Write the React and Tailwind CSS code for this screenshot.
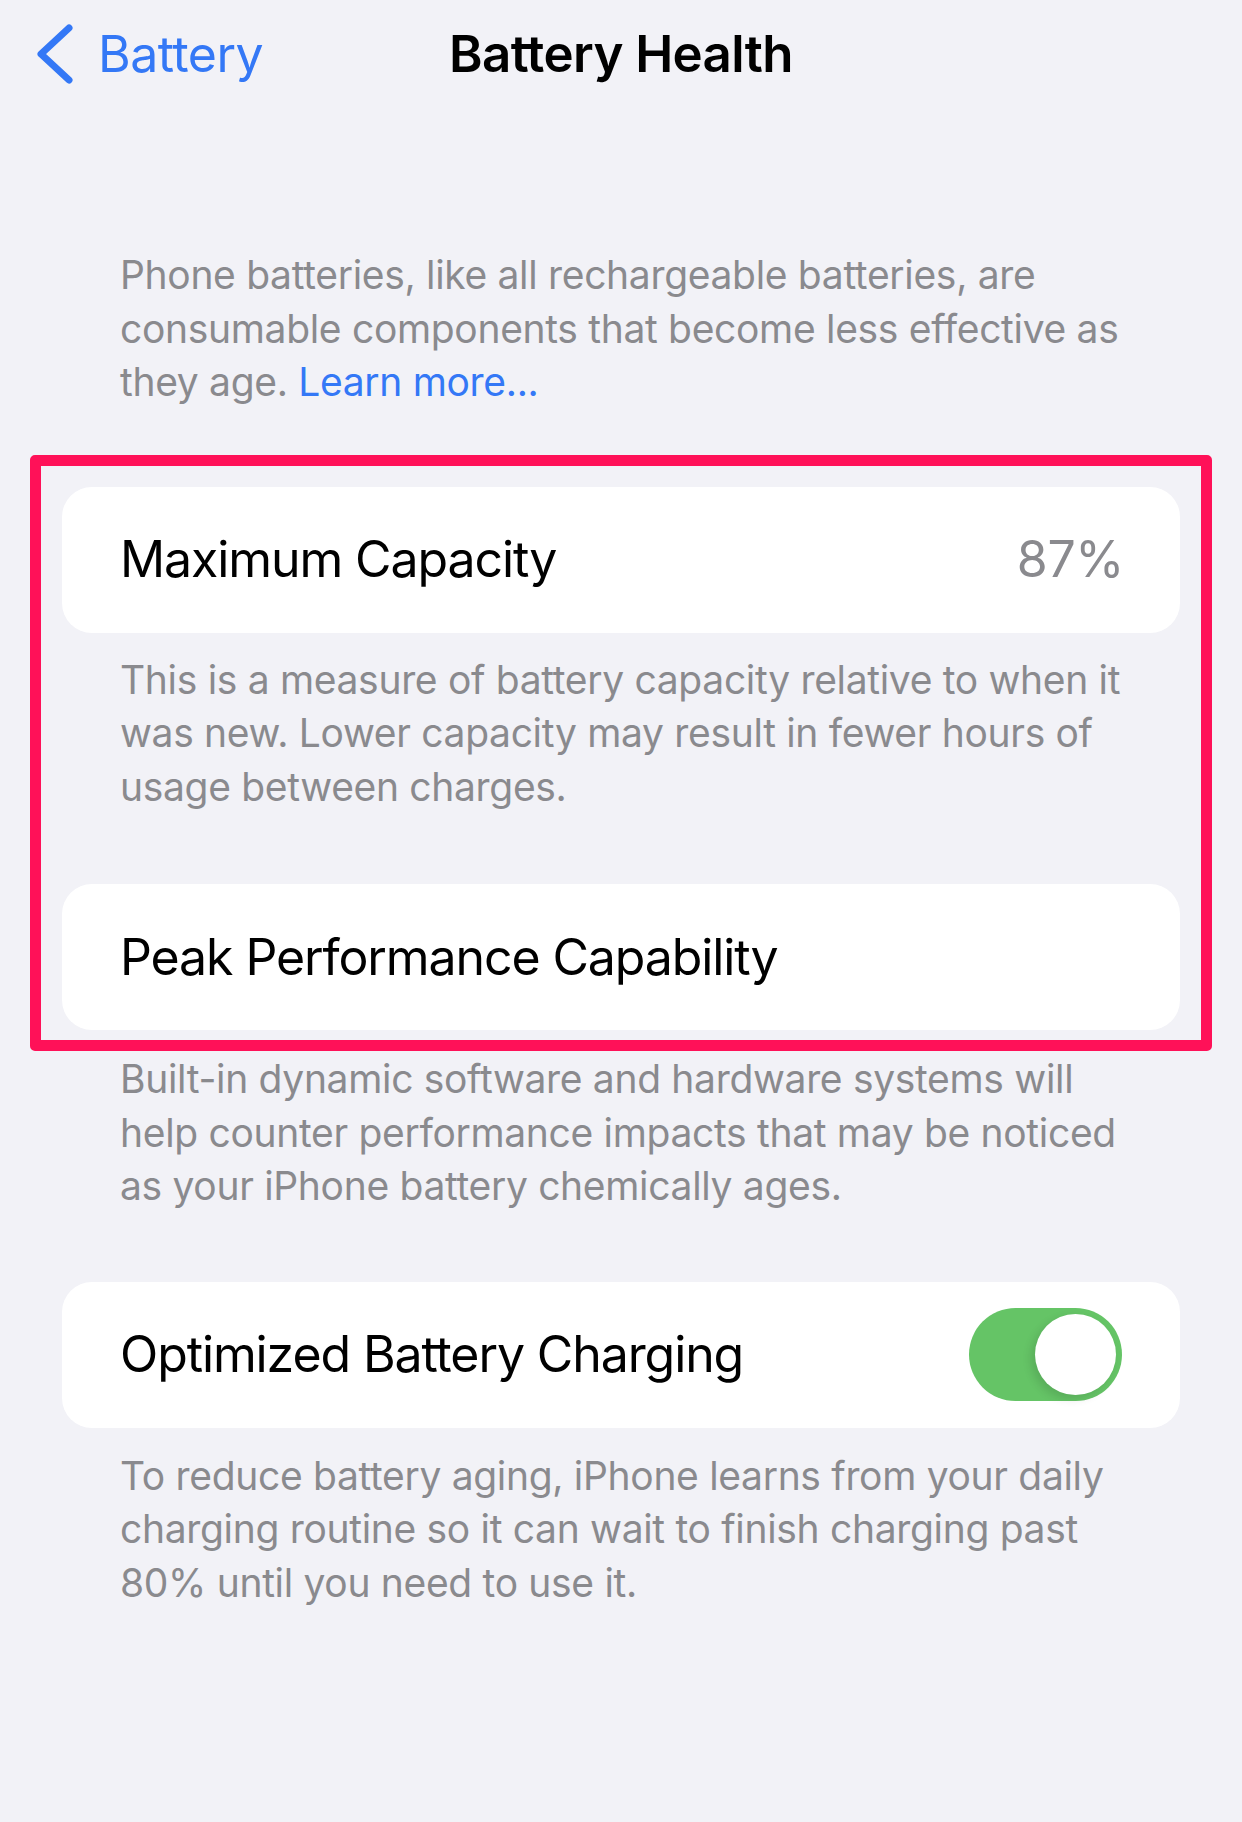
import React from "react";

function Chevron() {
  return (
    <svg width="40" height="60" viewBox="0 0 40 60" fill="none" className="shrink-0">
      <path
        d="M33 4 L5 30 L33 56"
        stroke="#3478f6"
        strokeWidth="7"
        strokeLinecap="round"
        strokeLinejoin="round"
      />
    </svg>
  );
}

function Footer({ lines, className = "" }) {
  return (
    <div className={`px-[120px] text-[39px] leading-[53.5px] tracking-[-0.32px] text-[#8a8a8e] ${className}`}>
      {lines.map((line, i) => (
        <div key={i} className="whitespace-nowrap">
          {line}
        </div>
      ))}
    </div>
  );
}

function Cell({ children }) {
  return (
    <div className="mx-[62px] flex h-[146px] items-center justify-between rounded-[30px] bg-white pl-[58px] pr-[56px] text-[50px] tracking-[-1.1px] text-black">
      {children}
    </div>
  );
}

function Toggle() {
  return (
    <div className="mr-[2px] flex h-[93px] w-[153px] items-center justify-end rounded-full bg-[#65c466] p-[6px]">
      <div className="h-[81px] w-[81px] rounded-full bg-white shadow-[-4px_4px_10px_rgba(0,0,0,0.12)]" />
    </div>
  );
}

export default function App() {
  return (
    <div className="min-h-[1822px] w-full bg-[#f2f2f7] font-['Inter','Liberation_Sans',sans-serif] antialiased">
      {/* navigation bar */}
      <div className="grid h-[108px] grid-cols-[1fr_auto_1fr] items-center">
        <div className="flex items-center pl-[36px]">
          <Chevron />
          <span className="ml-[22px] text-[50px] tracking-[-0.5px] text-[#3478f6]">Battery</span>
        </div>
        <h1 className="text-[51px] font-semibold tracking-[-0.6px] text-black">Battery Health</h1>
        <div />
      </div>

      <Footer
        className="pt-[140px] pb-[78px]"
        lines={[
          "Phone batteries, like all rechargeable batteries, are",
          "consumable components that become less effective as",
          <>
            they age. <span className="text-[#3478f6]">Learn more...</span>
          </>,
        ]}
      />

      <div className="relative">
        <Cell>
          <span>Maximum Capacity</span>
          <span className="tracking-[-0.4px] text-[#8a8a8e]">87%</span>
        </Cell>

        <Footer
          className="pt-[20px] pb-[71px]"
          lines={[
            "This is a measure of battery capacity relative to when it",
            "was new. Lower capacity may result in fewer hours of",
            "usage between charges.",
          ]}
        />

        <Cell>
          <span>Peak Performance Capability</span>
        </Cell>

        {/* highlight frame drawn over the two capacity rows */}
        <div className="pointer-events-none absolute -top-[32px] -bottom-[21px] left-[30px] right-[30px] rounded-[5px] border-[11px] border-[#ff1158]" />
      </div>

      <Footer
        className="pt-[22px] pb-[69px]"
        lines={[
          "Built-in dynamic software and hardware systems will",
          "help counter performance impacts that may be noticed",
          "as your iPhone battery chemically ages.",
        ]}
      />

      <Cell>
        <span>Optimized Battery Charging</span>
        <Toggle />
      </Cell>

      <Footer
        className="pt-[21px]"
        lines={[
          "To reduce battery aging, iPhone learns from your daily",
          "charging routine so it can wait to finish charging past",
          "80% until you need to use it.",
        ]}
      />
    </div>
  );
}
